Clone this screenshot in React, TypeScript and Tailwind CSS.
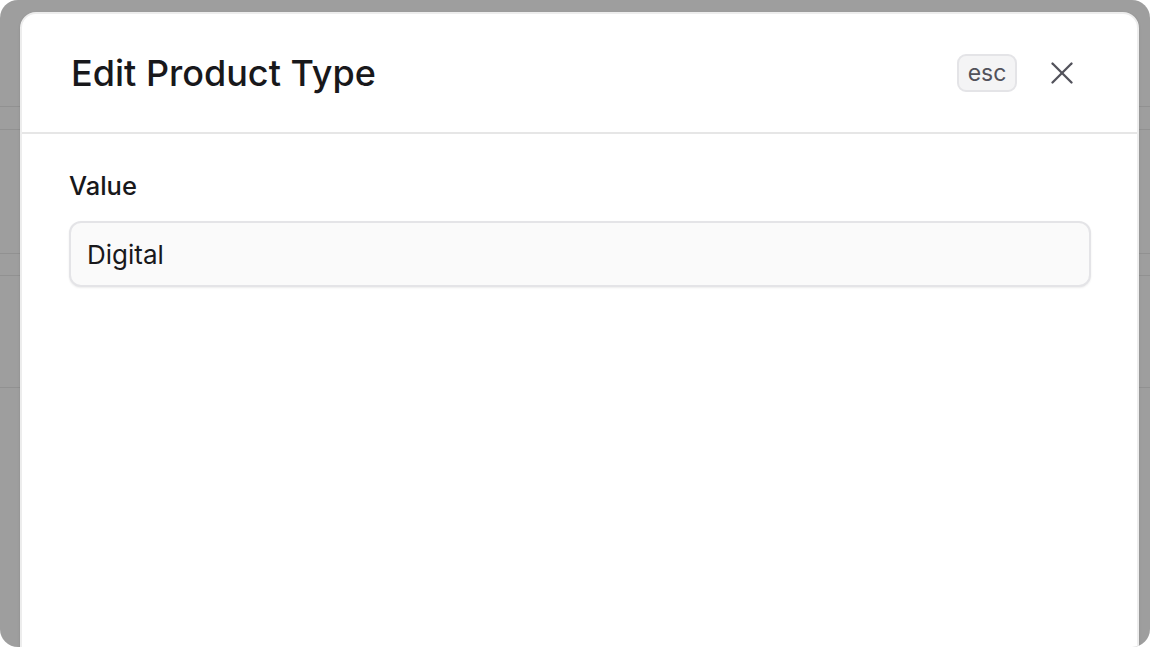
import { X } from "lucide-react";

export default function App() {
  return (
    <div className="h-[647px] w-[1150px] overflow-hidden bg-white font-['Inter',sans-serif]">
      <div className="relative h-full w-full overflow-hidden rounded-[18px] bg-[#9e9e9e]">
        {/* faint table rows under the overlay */}
        <div className="flex flex-col">
          <div className="h-[107px] border-b border-[#919191]" />
          <div className="h-[23px] border-b border-[#919191]" />
          <div className="h-[124px] border-b border-[#919191]" />
          <div className="h-[22px] border-b border-[#919191]" />
          <div className="h-[112px] border-b border-[#919191]" />
        </div>

        <div className="absolute left-[20px] right-[11px] top-[12px] h-[700px] rounded-[16px] border-2 border-[#ededed] bg-white shadow-sm">
          <div className="flex h-[120px] items-center justify-between border-b-2 border-[#e6e6e6] pl-[49px] pr-[56px]">
            <h1 className="text-[36px] font-medium tracking-[0px] text-[#18181b]">Edit Product Type</h1>
            <div className="flex items-center gap-[26px]">
              <kbd className="flex h-[38px] w-[60px] items-center justify-center rounded-[9px] border-2 border-[#e4e4e7] bg-[#f4f4f5] font-['Inter',sans-serif] text-[23px] text-[#52525b]">
                esc
              </kbd>
              <X className="h-[38px] w-[38px] text-[#52525b]" strokeWidth={1.5} />
            </div>
          </div>
          <div className="px-[47px] pt-[37px]">
            <label className="block text-[25.5px] font-medium leading-[30px] text-[#18181b]">Value</label>
            <div className="mt-[20px] flex h-[66px] w-[1022px] items-center rounded-[12px] border-2 border-[#e4e4e7] bg-[#fafafa] px-[16px] text-[26px] text-[#18181b] shadow-[0_1px_2px_rgba(0,0,0,0.08)]">
              Digital
            </div>
          </div>
        </div>
      </div>
    </div>
  );
}
